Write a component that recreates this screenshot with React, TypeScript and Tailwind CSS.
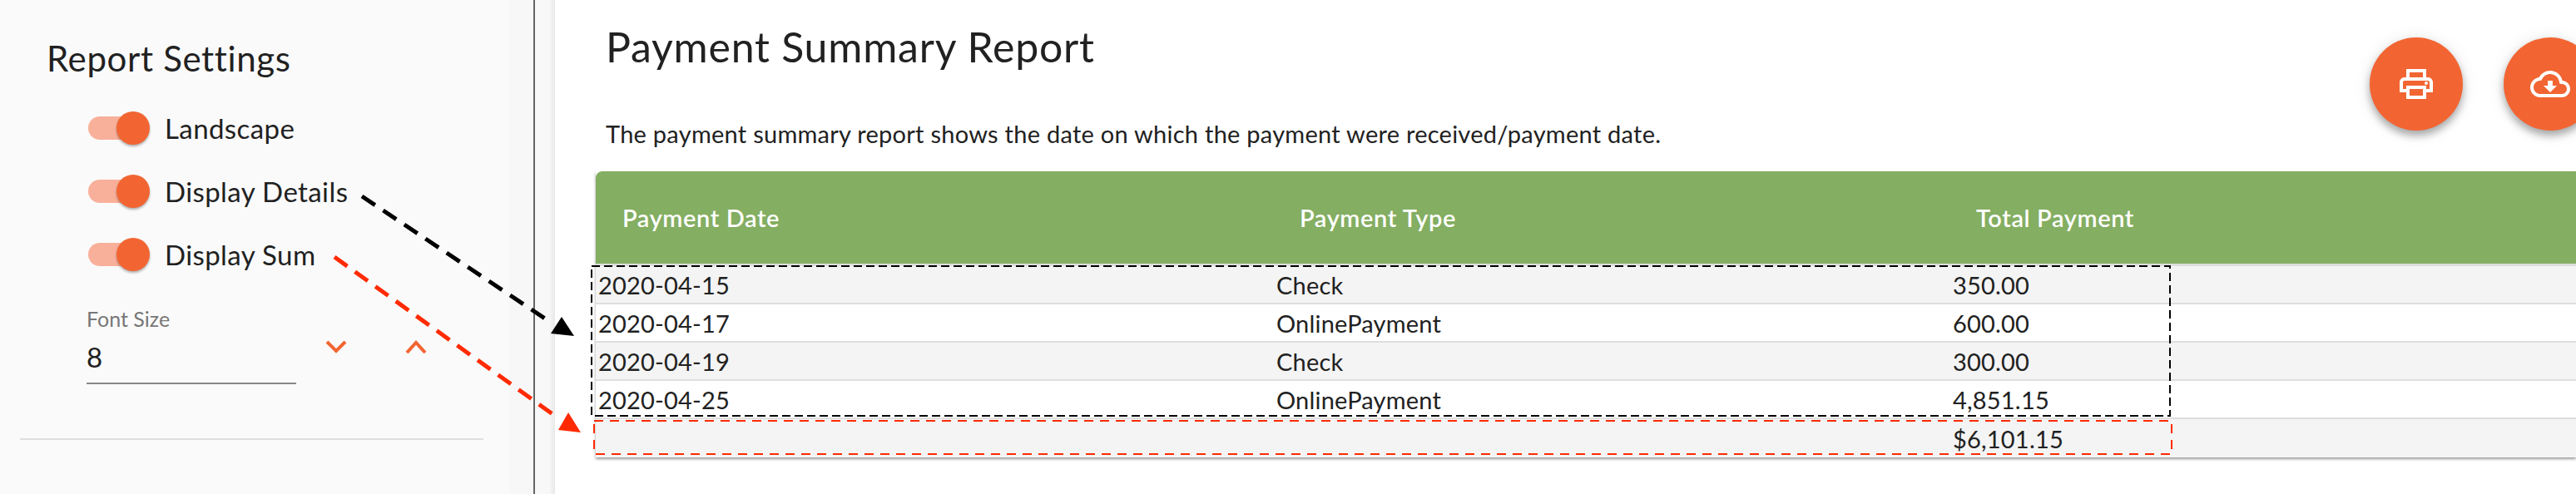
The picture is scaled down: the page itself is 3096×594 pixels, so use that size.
const FONT = "font-['Lato',sans-serif]";

function Toggle() {
  return (
    <div className="relative w-[74px] h-10 flex items-center">
      <div className="w-[68px] h-[28px] rounded-full bg-[#f9b09a]" />
      <div className="absolute left-[34px] top-0 w-10 h-10 rounded-full bg-[#f26532] shadow-[0_2px_3px_rgba(0,0,0,0.3)]" />
    </div>
  );
}

function SwitchRow({ label }: { label: string }) {
  return (
    <div className="flex items-center h-[76px] pl-[106px] gap-[18px]">
      <Toggle />
      <span className="text-[33px] tracking-[0.4px] text-[#212121] leading-none">{label}</span>
    </div>
  );
}

function Chevron({ up }: { up?: boolean }) {
  return (
    <svg width="26" height="16" viewBox="0 0 26 16" fill="none" stroke="#f26532" strokeWidth="4">
      <path d={up ? "M2 15 L13 3 L24 15" : "M2 2 L13 13 L24 2"} />
    </svg>
  );
}

function Row({ a, b, c, alt, last }: { a: string; b: string; c: string; alt?: boolean; last?: boolean }) {
  return (
    <div className={`grid grid-cols-[815px_813px_1fr] items-center h-[46px] pl-[3px] text-[29px] tracking-[0.2px] leading-none text-[#212121] ${alt ? "bg-[#f4f4f4]" : "bg-white"} ${last ? "" : "border-b-2 border-[#dedede]"}`}>
      <span>{a}</span>
      <span>{b}</span>
      <span>{c}</span>
    </div>
  );
}

const FAB = "w-[112px] h-[112px] shrink-0 rounded-full bg-[#f26532] flex items-center justify-center shadow-[0_6px_10px_rgba(0,0,0,0.3),0_2px_20px_rgba(0,0,0,0.1)]";

export default function App() {
  return (
    <div className={`relative w-[3096px] h-[594px] overflow-hidden bg-white flex ${FONT}`}>
      <aside className="w-[643px] shrink-0 bg-[#fafafa] border-r-2 border-[#666] flex">
        <div className="w-[612px] shrink-0">
          <h2 className="pl-[56px] pt-[46px] text-[42px] tracking-[0.65px] leading-[48px] text-[#212121] whitespace-nowrap">Report Settings</h2>
          <div className="mt-[22px]">
            <SwitchRow label="Landscape" />
            <SwitchRow label="Display Details" />
            <SwitchRow label="Display Sum" />
          </div>
          <div className="pl-[104px] mt-[25px] flex">
            <div className="w-[252px]">
              <div className="text-[25px] leading-[28px] text-[#777]">Font Size</div>
              <div className="mt-[14px] text-[33px] leading-[36px] pb-[13px] text-[#212121] border-b-2 border-[#888]">8</div>
            </div>
            <div className="flex gap-[70px] pl-[35px] pt-[40px] h-min">
              <Chevron />
              <Chevron up />
            </div>
          </div>
          <div className="ml-[24px] mr-[31px] mt-[65px] h-[2px] bg-[#dedede]" />
        </div>
        <div className="flex-1 bg-[#f7f7f7]" />
      </aside>
      <div className="w-[24px] shrink-0 bg-linear-to-r from-[#f8f8f8] from-70% to-[#e8e8e8]" />
      <main className="flex-1 min-w-0 relative">
        <h1 className="pl-[61px] pt-[28px] text-[50px] tracking-[0.77px] leading-[56px] text-[#212121] whitespace-nowrap">Payment Summary Report</h1>
        <p className="pl-[61px] mt-[59px] text-[29px] tracking-[0.26px] leading-[36px] text-[#212121] whitespace-nowrap">The payment summary report shows the date on which the payment were received/payment date.</p>
        <div className="ml-[49px] mt-[27px] shadow-[0_2px_3px_rgba(0,0,0,0.4)]">
          <div className="grid grid-cols-[814px_813px_1fr] items-center h-[111px] pl-[32px] rounded-tl-[8px] bg-[#84ae62] text-white text-[29px] tracking-[0.6px] font-semibold">
            <span>Payment Date</span>
            <span>Payment Type</span>
            <span>Total Payment</span>
          </div>
          <div className="h-[3px] bg-[#dedede]" />
          <Row a="2020-04-15" b="Check" c="350.00" alt />
          <Row a="2020-04-17" b="OnlinePayment" c="600.00" />
          <Row a="2020-04-19" b="Check" c="300.00" alt />
          <Row a="2020-04-25" b="OnlinePayment" c="4,851.15" />
          <Row a="" b="" c="$6,101.15" alt last />
        </div>
        <div className="absolute left-[2181px] top-[45px] flex gap-[49px]">
          <button className={FAB}>
            <svg width="48" height="48" viewBox="0 0 24 24" fill="#fff">
              <path d="M19 8h-1V3H6v5H5c-1.66 0-3 1.34-3 3v6h4v4h12v-4h4v-6c0-1.66-1.34-3-3-3zM8 5h8v3H8V5zm8 12v2H8v-4h8v2zm2-2v-2H6v2H4v-4c0-.55.45-1 1-1h14c.55 0 1 .45 1 1v4h-2z" />
              <circle cx="18" cy="11.5" r="1" />
            </svg>
          </button>
          <button className={FAB}>
            <svg width="48" height="48" viewBox="0 0 24 24" fill="#fff">
              <path d="M19.35 10.04C18.67 6.59 15.64 4 12 4 9.11 4 6.6 5.64 5.35 8.04 2.34 8.36 0 10.91 0 14c0 3.31 2.69 6 6 6h13c2.76 0 5-2.24 5-5 0-2.64-2.05-4.78-4.65-4.96zM19 18H6c-2.21 0-4-1.79-4-4 0-2.05 1.53-3.76 3.56-3.97l1.07-.11.5-.95C8.08 7.14 9.94 6 12 6c2.62 0 4.88 1.86 5.39 4.43l.3 1.5 1.53.11c1.56.1 2.78 1.41 2.78 2.96 0 1.65-1.35 3-3 3zm-5.55-8h-2.9v3H8l4 4 4-4h-2.55z" />
            </svg>
          </button>
        </div>
      </main>
      <svg className="absolute left-0 top-0" width="3096" height="594" fill="none">
        <rect x="711" y="320" width="1897" height="180" stroke="#000" strokeWidth="2" strokeDasharray="10 5" />
        <rect x="714" y="506" width="1896" height="40" stroke="#ff2a00" strokeWidth="2" strokeDasharray="11 8" />
        <path d="M435 236 L655 383" stroke="#000" strokeWidth="5" strokeDasharray="19 11.6" />
        <path d="M675 381 L662 401 L690 404 Z" fill="#000" />
        <path d="M402 309 L667 500" stroke="#ff2a00" strokeWidth="5" strokeDasharray="19 11.3" />
        <path d="M683 496 L671 517 L698 520 Z" fill="#ff2a00" />
      </svg>
    </div>
  );
}
